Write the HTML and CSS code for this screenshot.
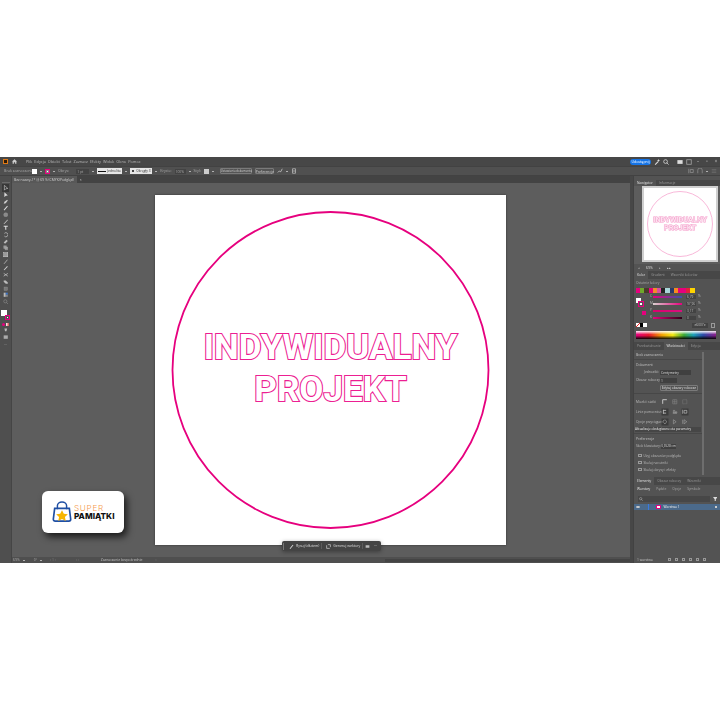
FILE: index.html
```html
<!DOCTYPE html>
<html lang="pl">
<head>
<meta charset="utf-8">
<title>Illustrator</title>
<link rel="stylesheet" href="styles.css">
</head>
<body>
<div class="app">
  <header class="menubar">
    <span class="ai-logo"></span>
    <svg class="home" viewBox="0 0 8 8"><path d="M0 4 4 .5 8 4H7v3.500H5V5H3v2.500H1V4z" fill="#cfcfcf"/></svg>
    <nav class="menu"><span>Plik</span><span>Edycja</span><span>Obiekt</span><span>Tekst</span><span>Zaznacz</span><span>Efekty</span><span>Widok</span><span>Okno</span><span>Pomoc</span></nav>
    <span class="spacer"></span>
    <span class="share">Udostępnij</span>
    <svg class="mi" viewBox="0 0 8 8"><path d="M1 7 5 3l1 1-4 4zM6 0l.6 1.400L8 2l-1.400.6L6 4l-.6-1.400L4 2l1.400-.6z" fill="#ddd"/></svg>
    <svg class="mi" viewBox="0 0 8 8"><circle cx="3.400" cy="3.400" r="2.500" fill="none" stroke="#ddd"/><path d="m5 5 2.500 2.500" stroke="#ddd"/></svg>
    <span class="gap2"></span>
    <svg class="mi" viewBox="0 0 8 8"><rect x=".5" y="1.500" width="7" height="5" fill="#ddd"/></svg>
    <svg class="mi" viewBox="0 0 8 8"><rect x="1" y="1" width="6" height="6" fill="none" stroke="#aaa"/></svg>
    <span class="winbtn">–</span><span class="winbtn">▫</span><span class="winbtn">×</span>
  </header>

  <div class="options">
    <span class="opt-label first">Brak zaznaczenia</span>
    <span class="swatch-white"></span><span class="caret"></span>
    <span class="swatch-stroke"></span><span class="caret"></span>
    <span class="opt-label">Obrys:</span>
    <span class="field narrow">1 pt</span><span class="caret"></span>
    <span class="stroke-prev"><i></i>Jednolita</span><span class="caret"></span>
    <span class="stroke-prev short"><b></b>Okrągły 3</span><span class="caret"></span>
    <span class="opt-label">Krycie:</span>
    <span class="field">100%</span><span class="caret"></span>
    <span class="opt-label">Styl:</span>
    <span class="swatch-grey"></span><span class="caret"></span>
    <span class="opt-btn wide">Ustawienia dokumentu</span>
    <span class="opt-btn pref">Preferencje</span>
    <svg class="mi" viewBox="0 0 8 8"><path d="M1 6 3 4l2 1 2-4" fill="none" stroke="#ccc"/></svg>
    <span class="caret"></span>
    <svg class="mi" viewBox="0 0 8 8"><path d="M2 1h4v6H2zM2 4h4" fill="none" stroke="#bbb"/></svg>
    <span class="spacer"></span>
    <svg class="mi dim" viewBox="0 0 8 8"><path d="M1 1v6M3 2h4v4H3z" fill="none" stroke="#aaa"/></svg>
    <svg class="mi dim" viewBox="0 0 8 8"><path d="M1 7V3a3 3 0 0 1 6 0v4" fill="none" stroke="#aaa"/></svg>
    <span class="caret"></span>
    <svg class="mi dim" viewBox="0 0 8 8"><path d="M1 2h6M1 4h6M1 6h6" stroke="#777"/></svg>
  </div>

  <div class="workspace">
    <aside class="tools">
      <span class="grip"></span>
      <svg class="tool sel" viewBox="0 0 8 8"><path d="M2 .5v7l2-2 3-.5z" fill="none" stroke="#ddd" stroke-width=".8"/></svg>
      <svg class="tool" viewBox="0 0 8 8"><path d="M2 .5v7l2-2 3-.5z" fill="#ddd"/></svg>
      <svg class="tool" viewBox="0 0 8 8"><path d="M1 7 2 4l4-3 1 1-3 4z" fill="#ccc"/></svg>
      <svg class="tool" viewBox="0 0 8 8"><path d="M1 7 6 1l1 1-5 6z" fill="#ddd"/></svg>
      <svg class="tool" viewBox="0 0 8 8"><circle cx="4" cy="4" r="3" fill="#8a8a8a" stroke="#aaa" stroke-width=".5"/></svg>
      <svg class="tool" viewBox="0 0 8 8"><path d="M1.500 7 7 1" stroke="#ddd" stroke-width="1.200"/></svg>
      <svg class="tool" viewBox="0 0 8 8"><path d="M1 1h6v1.500H4.800V7H3.200V2.500H1z" fill="#ddd"/></svg>
      <svg class="tool" viewBox="0 0 8 8"><path d="M2 2a3 3 0 1 1 0 4" fill="none" stroke="#ccc"/></svg>
      <svg class="tool" viewBox="0 0 8 8"><path d="M1 5 5 1l2 2-4 4z" fill="#bbb"/></svg>
      <svg class="tool" viewBox="0 0 8 8"><path d="M1 1h4v4H1z M3 3h4v4H3z" fill="#999" stroke="#bbb" stroke-width=".4"/></svg>
      <svg class="tool" viewBox="0 0 8 8"><rect x="1" y="1" width="6" height="6" fill="#9a9a9a" stroke="#ddd" stroke-width=".6"/></svg>
      <svg class="tool" viewBox="0 0 8 8"><path d="M1.500 7 6.500 1" stroke="#ccc" stroke-width="1"/></svg>
      <svg class="tool" viewBox="0 0 8 8"><path d="M1 7 6 1.500 7 2.500 2 7.500z" fill="#ccc"/></svg>
      <svg class="tool" viewBox="0 0 8 8"><path d="M1 2 7 6M1 6l6-4" stroke="#ccc"/></svg>
      <svg class="tool" viewBox="0 0 8 8"><path d="M1 2h3l3 3v2H4L1 4z" fill="#bbb"/></svg>
      <svg class="tool" viewBox="0 0 8 8"><rect x="1.500" y="1.500" width="5" height="5" fill="#777" stroke="#999" stroke-width=".5"/></svg>
      <svg class="tool" viewBox="0 0 8 8"><path d="M1 1h3v6H1z" fill="#bbb"/><path d="M4 1h3v3H4z" fill="#3f77c9"/><path d="M4 4h3v3H4z" fill="#888"/></svg>
      <svg class="tool" viewBox="0 0 8 8"><circle cx="3.400" cy="3.400" r="2.300" fill="none" stroke="#888"/><path d="m5 5 2.500 2.500" stroke="#888"/></svg>
      <div class="tool-colors">
        <span class="tc-white"></span>
        <span class="tc-pink"></span>
      </div>
      <div class="tool-modes"><i class="m-pink"></i><i class="m-grad"></i></div>
      <svg class="tool" viewBox="0 0 8 8"><path d="M2 2h4l-1 4H3z" fill="#bbb"/></svg>
      <svg class="tool" viewBox="0 0 8 8"><rect x="1" y="2" width="6" height="5" fill="#aaa"/></svg>
      <span class="tool-more">···</span>
    </aside>

    <div class="tabs-canvas">
      <div class="tabbar"><span class="doc-tab">Bez nazwy-1* @ 69 % (CMYK/Podgląd) <em>×</em></span></div>
      <main class="canvas">
        <section class="artboard">
          <svg class="art" viewBox="0 0 351 350">
            <circle cx="175.500" cy="175" r="158" fill="none" stroke="#e6007e" stroke-width="1.800"/>
            <text class="art-text" x="175.500" y="163.800" text-anchor="middle">INDYWIDUALNY</text>
            <text class="art-text" x="175.500" y="205.800" text-anchor="middle">PROJEKT</text>
          </svg>
        </section>
        <div class="floatbar">
          <span class="fb-grip"></span>
          <span class="fb-item"><svg viewBox="0 0 8 8"><path d="M1 7 6 1l1 1-5 6z" fill="#ddd"/></svg>Rysuj (dłutem)</span>
          <span class="fb-sep"></span>
          <span class="fb-item tight"><svg viewBox="0 0 8 8"><path d="M1 2v5h5M3 1h4v4" fill="none" stroke="#ddd"/></svg>Generuj wektory</span>
          <span class="fb-sep"></span>
          <svg class="fb-ic" viewBox="0 0 8 8"><path d="M1 2h6v4H1z" fill="#bbb"/></svg>
          <span class="fb-more">···</span>
        </div>
      </main>
      <div class="statusbar">
        <span class="st-zoom">69%</span><span class="caret"></span>
        <span class="st-num">0°</span><span class="caret"></span>
        <span class="st-nav first">‹ 1 ›</span>
        <span class="st-nav second">‹ ›</span>
        <span class="st-label">Zaznaczanie bezpośrednie</span>
        <span class="st-nav arrow">›</span>
        <span class="st-scroll"></span>
      </div>
    </div>

    <span class="dock-strip"></span>

    <aside class="panels">
      <div class="ptabs first"><span class="on">Nawigator</span><span>Informacje</span></div>
      <div class="navthumb">
        <div class="thumb-inner">
          <svg viewBox="0 0 72 72">
            <circle cx="36" cy="36" r="32.500" fill="none" stroke="#f59ac9" stroke-width=".7"/>
            <text class="thumb-text" x="36" y="33.500" text-anchor="middle">INDYWIDUALNY</text>
            <text class="thumb-text" x="36" y="42" text-anchor="middle">PROJEKT</text>
          </svg>
        </div>
      </div>
      <div class="navzoom"><span>◂</span><b>69%</b><span>▸</span><b>▴▴</b></div>

      <div class="ptabs"><span class="on">Kolor</span><span>Gradient</span><span>Wzorniki kolorów</span></div>
      <div class="color-panel">
        <div class="small-title">Ostatnie kolory</div>
        <div class="recent">
          <i class="c1"></i><i class="c2"></i><i class="c3"></i><i class="c4"></i><i class="c5"></i><i class="c6"></i><i class="c7"></i><i class="c8"></i><i class="c9"></i><i class="c10"></i><i class="c11"></i><i class="c12"></i><i class="c13"></i><i class="c14"></i>
        </div>
        <div class="sliders-row">
          <div class="fillstroke"><span class="fs-white"></span><span class="fs-stroke"></span><span class="fs-pink"></span></div>
          <div class="sliders">
            <div class="sl"><span>C</span><i class="g1"></i><b>6,79</b><span>%</span></div>
            <div class="sl"><span>M</span><i class="g2"></i><b>97,96</b><span>%</span></div>
            <div class="sl"><span>Y</span><i class="g3"></i><b>3,17</b><span>%</span></div>
            <div class="sl"><span>K</span><i class="g4"></i><b>0</b><span>%</span></div>
          </div>
        </div>
        <div class="hex-row">
          <i class="none"></i><i class="blk"></i><i class="wht"></i>
          <span class="spacer"></span>
          <span class="hex">e6007e</span>
          <span class="hex-ic"></span>
        </div>
        <div class="spectrum"></div>
      </div>

      <div class="ptabs"><span>Przekształcanie</span><span class="on">Właściwości</span><span>Edycja</span></div>
      <div class="props">
        <div class="props-scroll"></div>
        <div class="p-title">Brak zaznaczenia</div>
        <div class="p-rule"></div>
        <div class="p-title">Dokument</div>
        <div class="p-row"><span class="p-lab r">Jednostki:</span><span class="dd">Centymetry</span></div>
        <div class="p-row"><span class="p-lab r">Obszar roboczy:</span><span class="dd small">1</span></div>
        <div class="p-row"><span class="p-lab r"></span><span class="p-btn">Edytuj obszary robocze</span></div>
        <div class="p-rule"></div>
        <div class="p-row icons"><span class="p-lab">Miarki i siatki</span>
          <svg viewBox="0 0 8 8"><path d="M1 7V1h6" fill="none" stroke="#ddd" stroke-width="1.200"/></svg>
          <svg viewBox="0 0 8 8"><path d="M1 1h6v6H1zM4 1v6M1 4h6" fill="none" stroke="#888" stroke-width=".8"/></svg>
          <svg viewBox="0 0 8 8"><path d="M1 1h6v6H1z" fill="none" stroke="#888" stroke-width=".8" stroke-dasharray="1 .6"/></svg>
        </div>
        <div class="p-row icons"><span class="p-lab">Linie pomocnicze</span>
          <svg class="tile" viewBox="0 0 8 8"><path d="M2 1v6M2 2h4M2 6h4" fill="none" stroke="#ddd"/></svg>
          <svg viewBox="0 0 8 8"><path d="M1 6h6M2 2h2v4H2zM5 4h2v2H5z" fill="none" stroke="#aaa" stroke-width=".8"/></svg>
          <svg class="tile" viewBox="0 0 8 8"><path d="M1 1v6M3 2h4v4H3z" fill="none" stroke="#ddd" stroke-width=".8"/></svg>
        </div>
        <div class="p-row icons"><span class="p-lab">Opcje przyciągania</span>
          <svg class="tile" viewBox="0 0 8 8"><circle cx="4" cy="4" r="2.500" fill="none" stroke="#ddd" stroke-dasharray="1 .7"/></svg>
          <svg viewBox="0 0 8 8"><path d="M2 1v6l4-3z" fill="none" stroke="#aaa" stroke-width=".8"/></svg>
          <svg viewBox="0 0 8 8"><path d="M1 1v6M3 1v6l4-3z" fill="none" stroke="#aaa" stroke-width=".8"/></svg>
        </div>
        <div class="tip">Aktualizuje obsługiwane ota parametry</div>
        <div class="p-rule"></div>
        <div class="p-title">Preferencje</div>
        <div class="p-row"><span class="p-lab">Skok klawiatury:</span><span class="dd key">0,3528 cm</span></div>
        <label class="chk"><i></i>Użyj obszarów podglądu</label>
        <label class="chk"><i></i>Skaluj narożniki</label>
        <label class="chk"><i></i>Skaluj obrysy i efekty</label>
      </div>

      <div class="ptabs elem"><span class="on">Elementy</span><span>Obszar roboczy</span><span>Wzorniki</span></div>
      <div class="ptabs second"><span class="on">Warstwy</span><span>Pędzle</span><span>Opcje</span><span>Symbole</span></div>
      <div class="layers">
        <div class="search"><svg viewBox="0 0 8 8"><circle cx="3.400" cy="3.400" r="2.300" fill="none" stroke="#bbb"/><path d="m5 5 2.500 2.500" stroke="#bbb"/></svg>
          <svg class="funnel" viewBox="0 0 8 8"><path d="M0 0h8L5 4v4H3V4z" fill="#ddd"/></svg></div>
        <div class="layer"><span class="eye"></span><span class="bar"></span><span class="lthumb"></span><span class="lname">Warstwa 1</span><span class="spacer"></span><span class="ldot"></span></div>
        <span class="spacer"></span>
        <div class="lfoot"><span>1 warstwa</span><span class="spacer"></span><i></i><i></i><i></i><i></i><i></i><i></i></div>
      </div>
    </aside>
  </div>

  <div class="logo-card">
    <svg class="bag" viewBox="0 0 24 24">
      <path d="M7 9V5a5 4 0 0 1 10 0v4" fill="none" stroke="#1f4fa3" stroke-width="1.600"/>
      <path d="M4 8h16l1.500 12a2 2 0 0 1-2 2h-15a2 2 0 0 1-2-2z" fill="none" stroke="#1f4fa3" stroke-width="1.800"/>
      <path d="m12 10 2 4 4.400.5-3.200 3 .9 4.300L12 19.600l-4.100 2.200.9-4.300-3.200-3 4.400-.5z" fill="#f7b500"/>
    </svg>
    <div class="logo-words"><span class="lw1">SUPER</span><span class="lw2">PAMIĄTKI</span></div>
  </div>
</div>
</body>
</html>
```

FILE: styles.css
```css
* { box-sizing: border-box; }
html, body { margin: 0; padding: 0; background: #fff; }
body { width: 720px; height: 720px; padding-top: 157px; overflow: hidden; font-family: "Open Sans", "Liberation Sans", sans-serif; font-size: 4px; line-height: 1; color: #c4c4c4; }
i, em { font-style: normal; }
.spacer { flex: 1; }
.app { position: relative; width: 720px; height: 406px; display: flex; flex-direction: column; background: #4f4f4f; overflow: hidden; }
.menubar, .options, .tools, .tabbar, .statusbar, .panels, .floatbar { filter: blur(.35px); }

.menubar { height: 9px; flex: none; background: #474747; display: flex; align-items: center; padding: 0 1px 0 3px; gap: 3px; }
.ai-logo { width: 5px; height: 5px; background: #2e1a05; border: 1px solid #e07a16; }
.home { width: 5px; height: 5px; margin-left: 1px; }
.menu { display: flex; gap: 2px; margin-left: 6px; color: #b9b9b9; font-size: 3.900px; }
.share { width: 21px; height: 6px; border-radius: 3px; background: #1473e6; color: #fff; text-align: center; line-height: 6px; font-size: 3.600px; }
.mi { width: 6px; height: 6px; flex: none; }
.mi.dim { opacity: .7; }
.gap2 { width: 2px; }
.winbtn { width: 6px; text-align: center; color: #bbb; font-size: 5px; }

.options { height: 10px; flex: none; background: #505050; border-top: 1px solid #424242; border-bottom: 1px solid #424242; display: flex; align-items: center; padding: 0 3px 0 4px; gap: 3px; color: #a8a8a8; }
.opt-label { white-space: nowrap; font-size: 3.700px; }
.opt-label.first { width: 20px; }
.swatch-white { width: 5px; height: 5px; background: #fff; margin-left: 5px; }
.swatch-stroke { width: 5px; height: 5px; background: #fff; border: 1.500px solid #e6007e; box-shadow: inset 0 0 0 1px #888; }
.swatch-grey { width: 5px; height: 5px; background: #ccc; }
.caret { width: 2px; height: 1px; background: #b0b0b0; flex: none; }
.field { width: 11px; height: 5px; background: #434343; line-height: 5px; padding-left: 1px; color: #aaa; font-size: 3.300px; white-space: nowrap; }
.field.narrow { width: 13px; margin-left: 4px; }
.stroke-prev { width: 25px; height: 6px; background: #e6e6e6; color: #333; display: flex; align-items: center; gap: 1px; padding: 0 1px; font-size: 3.300px; white-space: nowrap; }
.stroke-prev i { width: 8px; height: 1px; background: #111; flex: none; }
.stroke-prev b { width: 2px; height: 2px; border-radius: 50%; background: #111; flex: none; margin: 0 1px; }
.stroke-prev.short { width: 22px; }
.opt-btn { height: 6px; border: .5px solid #7a7a7a; border-radius: 1px; line-height: 5px; text-align: center; white-space: nowrap; font-size: 2.900px; background: #555; color: #d0d0d0; }
.opt-btn.wide { width: 32px; margin-left: 3px; }
.opt-btn.pref { width: 19px; font-size: 3.400px; }

.workspace { flex: 1; min-height: 0; display: flex; }
.tools { width: 12px; flex: none; background: #4f4f4f; border-right: 1px solid #454545; display: flex; flex-direction: column; align-items: center; gap: 1.200px; padding-top: 2px; }
.grip { width: 8px; height: 1px; background: #6a6a6a; margin-top: 4px; margin-bottom: 1px; flex: none; }
.tool { width: 5.500px; height: 5.500px; flex: none; }
.tool.sel { background: #383838; box-shadow: 0 0 0 1px #383838; }
.tool-colors { position: relative; width: 9px; height: 10px; margin-top: 4px; flex: none; display: flex; }
.tc-white { width: 6px; height: 6px; background: #fff; flex: none; }
.tc-pink { width: 5px; height: 5px; margin: 5px 0 0 -2px; background: #fff; border: 1.500px solid #e6007e; box-shadow: inset 0 0 0 1px #555; flex: none; }
.tool-modes { display: flex; gap: 1px; height: 3px; margin-top: 2px; flex: none; }
.m-pink { width: 3px; height: 3px; background: #e6007e; border-radius: 50%; }
.m-grad { width: 3px; height: 3px; background: linear-gradient(90deg, #fff, #c44); }
.tool-more { color: #aaa; margin-top: 3px; }

.tabs-canvas { flex: 1; min-width: 0; display: flex; flex-direction: column; }
.tabbar { height: 7px; flex: none; background: #434343; display: flex; }
.doc-tab { width: 65px; background: #585858; color: #cfcfcf; font-size: 3.400px; line-height: 7px; padding-left: 2px; white-space: nowrap; }
.doc-tab em { margin-left: 5px; }
.canvas { position: relative; flex: 1; min-height: 0; background: #5d5d5d; padding: 12px 0 0 143px; overflow: hidden; }
.artboard { width: 351px; height: 350px; background: #fff; box-shadow: 0 0 2px rgba(0,0,0,.5); }
.art { display: block; width: 351px; height: 350px; }
.art-text { font-family: Roboto, "Liberation Sans", sans-serif; font-weight: 700; font-size: 35px; fill: #fff; stroke: #ec1f92; stroke-width: 2.200px; paint-order: stroke; stroke-linejoin: miter; }
.floatbar { position: absolute; left: 270px; top: 358px; width: 99px; height: 10px; background: #444; border-radius: 2px; display: flex; align-items: center; gap: 2px; padding: 0 1px; color: #ddd; box-shadow: 0 1px 4px rgba(0,0,0,.35); }
.fb-grip { width: 1px; height: 7px; background: #777; flex: none; }
.fb-item { display: flex; align-items: center; gap: 2px; white-space: nowrap; font-size: 3.500px; padding-left: 3px; }
.fb-item.tight { padding-left: 2px; }
.fb-item svg { width: 5px; height: 5px; flex: none; }
.fb-sep { width: 1px; height: 6px; background: #5c5c5c; flex: none; }
.fb-ic { width: 5px; height: 5px; flex: none; }
.fb-more { margin-left: 2px; }
.statusbar { height: 6px; flex: none; background: #4f4f4f; display: flex; align-items: center; padding-left: 1px; gap: 3px; color: #aaa; font-size: 3.400px; white-space: nowrap; }
.st-num { margin-left: 6px; }
.st-nav { color: #888; }
.st-nav.first { margin-left: 5px; }
.st-nav.second { margin-left: 17px; }
.st-nav.arrow { margin-left: 10px; }
.st-label { margin-left: 19px; color: #c0c0c0; }
.st-scroll { flex: 1; height: 3px; margin-left: 225px; background: #444; }

.dock-strip { width: 3px; flex: none; background: #474747; }
.panels { position: relative; width: 87px; flex: none; background: #535353; display: flex; flex-direction: column; border-left: 1px solid #424242; }
.ptabs { height: 8px; flex: none; background: #474747; display: flex; color: #9a9a9a; font-size: 3.300px; white-space: nowrap; }
.ptabs.first { margin-top: 4px; height: 6px; }
.ptabs span { padding: 0 3px; display: flex; align-items: center; }
.ptabs .on { background: #535353; color: #e0e0e0; }
.navthumb { height: 78px; flex: none; background: #5d5d5d; padding: 0 0 0 8px; }
.thumb-inner { width: 76px; height: 76px; background: #fff; border: 2px solid #cfcfcf; }
.thumb-inner svg { display: block; width: 72px; height: 72px; }
.thumb-text { font-family: Roboto, sans-serif; font-weight: 700; font-size: 7.400px; fill: #fbe3f0; stroke: #f59ac9; stroke-width: 1px; paint-order: stroke; }
.navzoom { height: 7px; flex: none; display: flex; align-items: center; gap: 6px; padding-left: 4px; color: #aaa; font-size: 3.400px; }
.navzoom b { font-weight: 400; color: #ddd; }

.color-panel { height: 63px; flex: none; padding: 2px 2px 0 2px; display: flex; flex-direction: column; }
.small-title { color: #aaa; font-size: 3.300px; height: 5px; white-space: nowrap; }
.recent { display: flex; height: 5px; margin-top: 2px; }
.recent i { width: 4.200px; height: 5px; flex: none; }
.c1 { background: #e6007e; } .c2 { background: #6fa82c; } .c3 { background: #4a3a2a; } .c4 { background: #e6007e; } .c5 { background: #f28c28; }
.c6 { background: #d94fa0; } .c7 { background: #222; } .c8 { background: #a7d5d9; } .c9 { background: #2a3a6a; } .c10 { background: #f58a1f; }
.c11 { background: #e6007e; } .c12 { background: #e6007e; } .c13 { background: #e2203a; } .c14 { background: #ffd400; }
.sliders-row { display: flex; margin-top: 2px; gap: 3px; height: 25px; flex: none; }
.fillstroke { position: relative; width: 11px; height: 24px; flex: none; }
.fs-white { display: block; width: 5px; height: 5px; background: #fff; margin-top: 3px; }
.fs-stroke { display: block; width: 6px; height: 6px; background: #fff; border: 1.500px solid #e6007e; box-shadow: inset 0 0 0 1px #555; margin: -2px 0 0 2px; }
.fs-pink { display: block; width: 4px; height: 4px; background: #e6007e; margin: 4px 0 0 6px; }
.sliders { flex: 1; display: flex; flex-direction: column; gap: 2.900px; }
.sl { display: flex; align-items: center; height: 4.200px; color: #bbb; font-size: 3.200px; }
.sl span { width: 3px; flex: none; }
.sl i { width: 29px; height: 2px; flex: none; }
.sl b { width: 10px; height: 4px; background: #434343; font-weight: 400; padding-left: 1px; line-height: 4px; margin: 0 2px 0 4px; }
.g1 { background: linear-gradient(90deg, #e6007e, #3a50a8); }
.g2 { background: linear-gradient(90deg, #d9d0cf, #e6007e); }
.g3 { background: linear-gradient(90deg, #d8006e, #d8107e); }
.g4 { background: linear-gradient(90deg, #e6007e, #300018); }
.hex-row { display: flex; align-items: center; height: 6px; margin-top: 2px; flex: none; }
.hex-row i { width: 3.500px; height: 4px; display: block; }
.none { background: linear-gradient(135deg, #fff 42%, #e22 42% 58%, #fff 58%); }
.blk { background: #000; }
.wht { background: #fff; }
.hex { width: 16px; height: 5px; background: #434343; text-align: center; line-height: 5px; font-size: 3.200px; }
.hex-ic { width: 4px; height: 5px; border: .6px solid #999; margin: 0 3px 0 3px; }
.spectrum { height: 8px; margin-top: 3px; flex: none; margin-right: 2px; background:
  linear-gradient(180deg, rgba(255,255,255,.95) 0%, rgba(255,255,255,0) 45%, rgba(0,0,0,0) 55%, rgba(0,0,0,.95) 100%),
  linear-gradient(90deg, #e6007e, #e8132b 16%, #f5a100 32%, #f5ea14 46%, #3aa935 60%, #1aa0b8 72%, #2a4aa8 84%, #8a1a8a 100%); }

.props { position: relative; height: 127px; flex: none; padding: 3px 3px 0 2px; overflow: hidden; }
.props-scroll { position: absolute; right: 16px; top: 2px; width: 2px; height: 123px; background: #6e6e6e; }
.p-title { height: 5px; color: #c4c4c4; font-size: 3.400px; white-space: nowrap; }
.p-rule { height: 1px; background: #474747; margin: 1px 0 3px -2px; width: 68px; }
.p-row { display: flex; align-items: center; height: 8px; font-size: 3.300px; color: #bdbdbd; }
.p-lab { width: 24px; flex: none; white-space: nowrap; }
.p-lab.r { text-align: right; padding-right: 1px; }
.dd { width: 31px; height: 5px; background: #404040; color: #ddd; line-height: 5px; padding-left: 1px; white-space: nowrap; }
.dd.small { width: 17px; }
.dd.key { width: 15px; text-align: center; margin-left: 1px; font-size: 3px; padding-left: 0; }
.p-btn { width: 38px; height: 6px; border: .5px solid #7a7a7a; border-radius: 1px; line-height: 5px; text-align: center; color: #e0e0e0; white-space: nowrap; font-size: 3.200px; }
.p-row.icons { height: 10px; gap: 4.500px; }
.p-row.icons .p-lab { margin-right: -2.500px; }
.p-row.icons svg { width: 5.500px; height: 5.500px; flex: none; }
.p-row.icons svg.tile { background: #3c3c3c; box-shadow: 0 0 0 .5px #3c3c3c; }
.tip { height: 5px; width: 66px; margin-left: -1px; background: #464646; color: #eee; font-size: 3.100px; line-height: 5px; white-space: nowrap; }
.chk { display: flex; align-items: center; gap: 2px; height: 7px; color: #b8b8b8; font-size: 3.300px; white-space: nowrap; }
.p-row + .chk { margin-top: 2px; }
.chk i { width: 3.500px; height: 3.500px; border: .6px solid #999; margin-left: 2px; flex: none; }

.ptabs.elem { background: #474747; }
.ptabs.second { background: #535353; height: 8px; color: #a5a5a5; }
.ptabs.second span { padding: 0 3px; }
.layers { flex: 1; min-height: 0; display: flex; flex-direction: column; background: #535353; }
.search { height: 6px; margin: 3px 10px 2px 4px; background: #474747; display: flex; align-items: center; justify-content: space-between; padding: 0 1px; position: relative; flex: none; }
.search svg { width: 4px; height: 4px; }
.search .funnel { position: absolute; right: -7px; width: 4.500px; height: 4.500px; }
.layer { height: 6px; background: #4b6a8b; display: flex; align-items: center; gap: 3px; padding-left: 2px; color: #eee; font-size: 3.300px; flex: none; white-space: nowrap; }
.eye { width: 3.500px; height: 2px; background: #ccc; border-radius: 50%; flex: none; }
.bar { width: 1px; height: 6px; background: #3a7adf; margin-left: 5px; flex: none; }
.lthumb { width: 5px; height: 4px; background: #fff; border: .6px solid #e6007e; margin-left: 4px; flex: none; }
.ldot { width: 2px; height: 2px; background: #ccc; margin-right: 3px; flex: none; }
.lfoot { height: 7px; flex: none; display: flex; align-items: center; gap: 3.500px; padding: 0 14px 0 3px; color: #c4c4c4; font-size: 3.300px; white-space: nowrap; }
.lfoot i { width: 3.500px; height: 3.500px; border: .6px solid #999; }

.logo-card { position: absolute; left: 42px; top: 334px; width: 82px; height: 42px; background: #fff; border-radius: 6px; box-shadow: 3px 4px 7px rgba(0,0,0,.7); display: flex; align-items: center; padding-left: 9px; gap: 1px; }
.bag { width: 22px; height: 22px; flex: none; }
.logo-words { display: flex; flex-direction: column; gap: 0; font-family: Inter, "Liberation Sans", sans-serif; }
.lw1 { font-size: 8.200px; color: #f59a4a; letter-spacing: .7px; line-height: 8px; font-weight: 300; }
.lw2 { font-size: 8.200px; color: #111; font-weight: 800; line-height: 8px; white-space: nowrap; }
```
